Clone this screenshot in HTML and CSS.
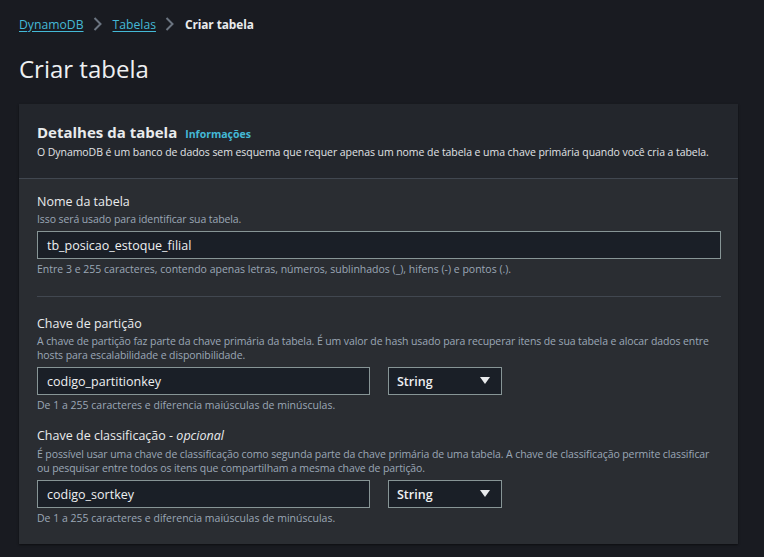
FILE: index.html
```html
<!DOCTYPE html>
<html lang="pt-BR">
<head>
<meta charset="utf-8">
<link rel="stylesheet" href="styles.css">
</head>
<body>
<div class="page">
  <nav class="crumbs">
    <a class="crumb-link" href="#">DynamoDB</a>
    <svg class="chev" width="10" height="14" viewBox="0 0 10 14"><path d="M1.5 1 L7.5 7 L1.5 13" fill="none" stroke="#6b7480" stroke-width="2"/></svg>
    <a class="crumb-link" href="#">Tabelas</a>
    <svg class="chev" width="10" height="14" viewBox="0 0 10 14"><path d="M1.5 1 L7.5 7 L1.5 13" fill="none" stroke="#6b7480" stroke-width="2"/></svg>
    <span class="crumb-current">Criar tabela</span>
  </nav>
  <h1 class="page-title">Criar tabela</h1>
  <section class="panel">
    <header class="panel-head">
      <div class="panel-title-row">
        <h2 class="panel-title">Detalhes da tabela</h2>
        <a class="info" href="#">Informações</a>
      </div>
      <p class="panel-desc">O DynamoDB é um banco de dados sem esquema que requer apenas um nome de tabela e uma chave primária quando você cria a tabela.</p>
    </header>
    <div class="panel-body">
      <div class="field">
        <div class="label">Nome da tabela</div>
        <div class="hint">Isso será usado para identificar sua tabela.</div>
        <div class="input wide">tb_posicao_estoque_filial</div>
        <div class="constraint">Entre 3 e 255 caracteres, contendo apenas letras, números, sublinhados (_), hifens (-) e pontos (.).</div>
      </div>
      <hr class="divider">
      <div class="field">
        <div class="label">Chave de partição</div>
        <div class="hint">A chave de partição faz parte da chave primária da tabela. É um valor de hash usado para recuperar itens de sua tabela e alocar dados entre hosts para escalabilidade e disponibilidade.</div>
        <div class="key-row">
          <div class="input key">codigo_partitionkey</div>
          <div class="select">String<svg class="caret" width="10" height="8" viewBox="0 0 10 8"><path d="M0 0 H10 L5 7 Z" fill="#e9ebed"/></svg></div>
        </div>
        <div class="constraint">De 1 a 255 caracteres e diferencia maiúsculas de minúsculas.</div>
      </div>
      <div class="field second">
        <div class="label">Chave de classificação - <i>opcional</i></div>
        <div class="hint">É possível usar uma chave de classificação como segunda parte da chave primária de uma tabela. A chave de classificação permite classificar ou pesquisar entre todos os itens que compartilham a mesma chave de partição.</div>
        <div class="key-row">
          <div class="input key">codigo_sortkey</div>
          <div class="select">String<svg class="caret" width="10" height="8" viewBox="0 0 10 8"><path d="M0 0 H10 L5 7 Z" fill="#e9ebed"/></svg></div>
        </div>
        <div class="constraint">De 1 a 255 caracteres e diferencia maiúsculas de minúsculas.</div>
      </div>
    </div>
  </section>
</div>
</body>
</html>
```
FILE: styles.css
```css
* { box-sizing: border-box; }
html, body { margin: 0; padding: 0; }
body {
  background: #191b21;
  font-family: "Open Sans", "Noto Sans", sans-serif;
  color: #d1d5db;
  width: 764px;
  height: 557px;
  overflow: hidden;
}
.page { padding: 14px 26px 0 19px; }
.crumbs {
  display: flex;
  align-items: center;
  font-size: 12.2px;
  height: 20px;
}
.crumb-link {
  color: #44b9d6;
  text-decoration: underline;
  text-underline-offset: 2px;
}
.chev { display: block; margin: 0 10px 0 9px; }
.crumb-current { color: #e9ebed; font-weight: 700; font-size: 11.9px; letter-spacing: -0.1px; }
.page-title {
  margin: 0;
  padding-top: 19px;
  font-size: 24px;
  font-weight: 400;
  color: #eef0f2;
  line-height: 32px;
  height: 70px;
}
.panel {
  background: #2a2d32;
  box-shadow: 0 1px 2px rgba(0,0,0,0.5);
  width: 719px;
}
.panel-head {
  background: #23262c;
  border-bottom: 1px solid #414750;
  padding: 18px 18px 18px 18px;
}
.panel-title-row { display: flex; align-items: baseline; gap: 8px; }
.panel-title {
  margin: 0;
  font-size: 15px;
  font-weight: 700;
  color: #e9ebed;
  line-height: 20px;
}
.info { color: #44b9d6; font-size: 10.5px; font-weight: 700; text-decoration: none; }
.panel-desc { margin: 2px 0 0; font-size: 10.5px; letter-spacing: -0.06px; color: #e0e3e6; line-height: 16px; white-space: nowrap; }
.panel-body { padding: 14px 18px 19px 18px; }
.label { font-size: 12.5px; color: #e9ebed; line-height: 18px; }
.hint, .constraint { font-size: 10.5px; color: #9ba7b6; line-height: 14px; }
.hint { margin-top: 1px; letter-spacing: -0.1px; }
.input {
  height: 28px;
  background: #1a1f27;
  border: 1px solid #879596;
  color: #eef0f2;
  font-size: 12.5px;
  padding: 0 9px;
  display: flex;
  align-items: center;
  margin-top: 5px;
}
.input.wide { width: 684px; }
.constraint { margin-top: 3px; }
.divider { border: 0; border-top: 1px solid #414750; width: 684px; margin: 20px 0 18px; }
.key-row { display: flex; gap: 18px; margin-top: 5px; }
.key-row .input { margin-top: 0; }
.input.key { width: 333px; }
.select {
  width: 114px;
  height: 28px;
  background: #1a1f27;
  border: 1px solid #879596;
  color: #eef0f2;
  font-size: 12.5px;
  font-weight: 600;
  display: flex;
  align-items: center;
  justify-content: space-between;
  padding: 0 11px 0 8px;
}
.caret { display: block; }
.field.second { margin-top: 15px; }
.field.second .hint { margin-top: 2px; }
```
